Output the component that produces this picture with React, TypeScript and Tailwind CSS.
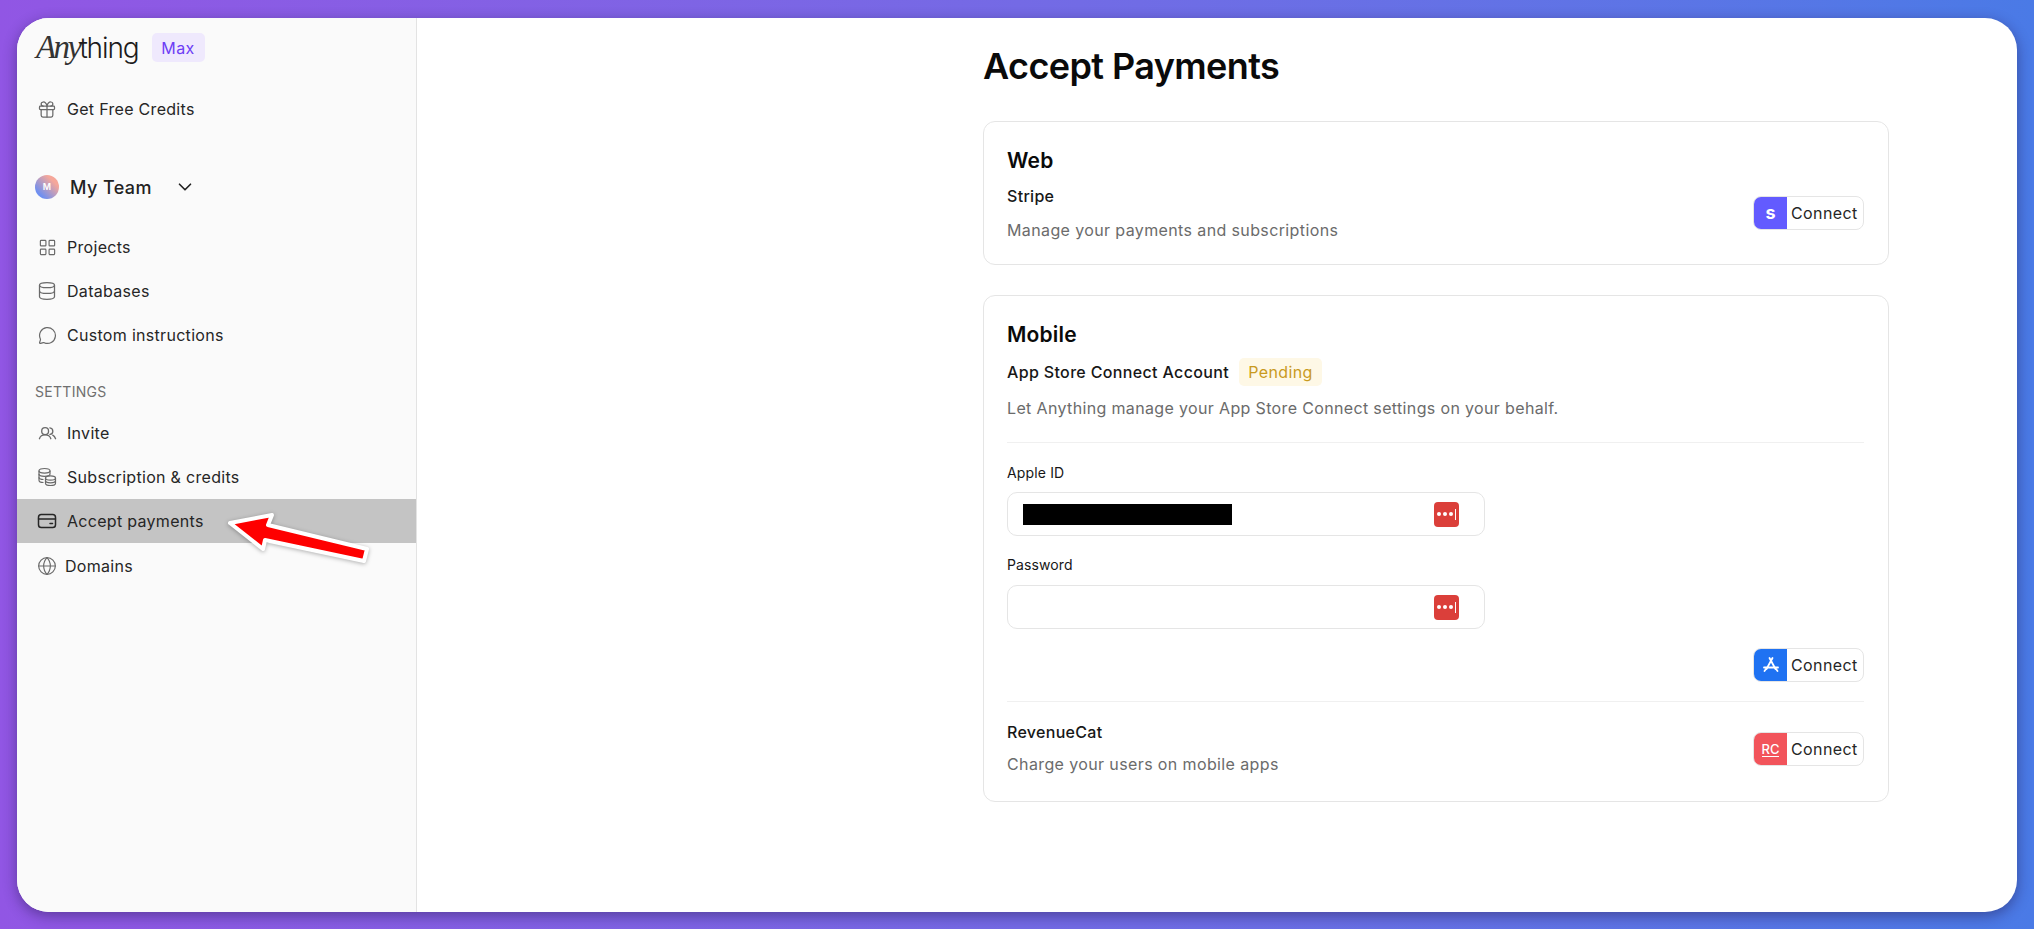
import { ChevronDown, Database, Gift, Globe, LayoutGrid, MessageCircle } from 'lucide-react'
import type { ReactNode } from 'react'

const font = { fontFamily: 'Inter, "Liberation Sans", sans-serif' }

function UsersIcon() {
  return (
    <svg viewBox="0 0 20 20" fill="none" stroke="currentColor" strokeWidth="1.4" strokeLinecap="round" className="h-[19px] w-[19px]">
      <circle cx="7.5" cy="7.5" r="3.6" />
      <path d="M1.5 15.5c.8-2.6 3-4 6-4s5.200 1.400 6 4" />
      <path d="M12.500 4c1.900.2 3.100 1.700 3.100 3.500s-1.200 3.300-3 3.500" />
      <path d="M15.500 11.800c1.400.6 2.400 1.900 3 3.700" />
    </svg>
  )
}

function CoinsIcon() {
  return (
    <svg viewBox="0 0 20 20" fill="none" stroke="currentColor" strokeWidth="1.2" className="h-[20px] w-[20px]">
      <ellipse cx="7.500" cy="3.800" rx="5.500" ry="2.300" />
      <path d="M2 3.800v9.400c0 1.300 2 2.300 4.500 2.300" />
      <path d="M2 7c0 1.300 2.500 2.300 5.500 2.300S13 8.300 13 7V3.800" />
      <path d="M2 10.200c0 1.200 2 2.200 4.500 2.300" />
      <ellipse cx="13.500" cy="11" rx="5" ry="2.200" fill="#fafafa" />
      <path d="M8.500 11v5.200c0 1.300 2.200 2.300 5 2.300s5-1 5-2.300V11" />
      <path d="M8.500 13.600c0 1.300 2.200 2.300 5 2.300s5-1 5-2.300" />
    </svg>
  )
}

function CardIcon() {
  return (
    <svg viewBox="0 0 20 20" fill="none" stroke="currentColor" strokeWidth="1.5" strokeLinecap="round" className="h-[20px] w-[20px]">
      <rect x="1.500" y="3.500" width="17" height="13" rx="2.800" />
      <path d="M1.500 8h17" />
      <path d="M13 12.500h2.500" />
    </svg>
  )
}

function NavRow({ icon, label, active, tight }: { icon: ReactNode; label: string; active?: boolean; tight?: boolean }) {
  return (
    <div className={`flex h-[44px] items-center pl-5 text-[16px] tracking-[0.3px] text-[#262626] ${active ? 'bg-[#c4c4c4]' : ''}`}>
      <span className={`flex h-5 w-5 items-center justify-center ${active ? 'text-[#262626]' : 'text-[#6a6a6a]'}`}>{icon}</span>
      <span className={tight ? 'ml-[8px]' : 'ml-[10px]'}>{label}</span>
    </div>
  )
}

function ConnectButton({ color, className, children }: { color: string; className?: string; children: ReactNode }) {
  return (
    <div className={`flex h-[34px] w-[111px] shrink-0 overflow-hidden rounded-[8px] border border-[#e5e5e5] bg-white ${className ?? ''}`}>
      <span className={`flex w-[33px] shrink-0 items-center justify-center text-white ${color}`}>{children}</span>
      <span className="ml-[4px] text-[16px] leading-[32px] tracking-[0.4px] text-[#262626]">Connect</span>
    </div>
  )
}

function KeyField({ children }: { children?: ReactNode }) {
  return (
    <div className="flex h-[44px] w-[478px] items-center rounded-[10px] border border-[#e5e5e5] bg-white pl-[15px] pr-[25px]">
      {children}
      <span className="ml-auto flex h-[25px] w-[25px] items-center justify-center gap-[2px] rounded-[4px] bg-[#db3f3a]">
        <i className="h-[4px] w-[4px] rounded-full bg-white" />
        <i className="h-[4px] w-[4px] rounded-full bg-white" />
        <i className="h-[4px] w-[4px] rounded-full bg-white" />
        <i className="h-[11px] w-[1px] bg-white" />
      </span>
    </div>
  )
}

export default function App() {
  return (
    <div
      style={font}
      className="h-[929px] w-[2034px] overflow-hidden bg-gradient-to-r from-[#9156e4] to-[#4a7ae6] pb-[17px] pl-[17px] pr-[17px] pt-[18px]"
    >
      <div className="relative flex h-[894px] overflow-hidden rounded-[32px] bg-white shadow-[0_4px_14px_rgba(30,20,70,0.45)]">
        <aside className="w-[400px] shrink-0 border-r border-[#e3e3e3] bg-[#fafafa]">
          <div className="flex h-[48px] items-center pl-[19px] pt-[11px]">
            <span className="text-[33px] leading-none tracking-[-0.08em] text-[#333]" style={{ fontFamily: '"Liberation Serif", serif' }}>
              <em>Any</em>
            </span>
            <span className="text-[28px] font-light leading-none tracking-[-0.04em] text-[#1c1c1c]">thing</span>
            <span className="ml-[13px] flex h-[29px] w-[53px] items-center justify-center rounded-[5px] bg-[#efe9fd] text-[16px] tracking-[0.4px] text-[#6d3df5]">Max</span>
          </div>
          <div className="mt-[21px]">
            <NavRow icon={<Gift size={21} strokeWidth={1.5} />} label="Get Free Credits" />
          </div>
          <div className="mt-[34px] flex h-[44px] items-center pl-[18px]">
            <span
              className="flex h-6 w-6 items-center justify-center rounded-full text-[9px] font-semibold text-white"
              style={{ background: 'linear-gradient(45deg, #6f8ff0 20%, #f5a79a 75%)' }}
            >
              M
            </span>
            <span className="ml-[11px] text-[18px] font-medium tracking-[0.4px] text-[#222]">My Team</span>
            <ChevronDown size={22} strokeWidth={1.8} className="ml-[22px] text-[#222]" />
          </div>
          <div className="mt-[16px]">
            <NavRow icon={<LayoutGrid size={19} strokeWidth={1.5} />} label="Projects" />
            <NavRow icon={<Database size={20} strokeWidth={1.5} />} label="Databases" />
            <NavRow icon={<MessageCircle size={19} strokeWidth={1.5} />} label="Custom instructions" />
          </div>
          <div className="mt-[25px] pl-[18px] text-[14px] leading-[20px] tracking-[0.3px] text-[#6f6f6f]">SETTINGS</div>
          <div className="mt-[9px]">
            <NavRow icon={<UsersIcon />} label="Invite" />
            <NavRow icon={<CoinsIcon />} label="Subscription & credits" />
            <NavRow icon={<CardIcon />} label="Accept payments" active />
            <div className="pt-[1px]">
              <NavRow icon={<Globe size={20} strokeWidth={1.4} />} label="Domains" tight />
            </div>
          </div>
        </aside>

        <main className="flex-1 pl-[566px]">
          <div className="w-[906px]">
            <h1 className="mt-[25px] text-[36px] font-semibold leading-[46px] tracking-[-0.6px] text-[#0a0a0a]">Accept Payments</h1>

            <section className="mt-[32px] h-[144px] rounded-[12px] border border-[#e5e5e5] bg-white pl-[23px] pr-[24px] pt-[25px]">
              <h2 className="text-[21px] font-semibold leading-[28px] tracking-[0.2px] text-[#0a0a0a]">Web</h2>
              <div className="flex items-start justify-between">
                <div>
                  <div className="mt-[9px] text-[16px] font-medium leading-[24px] tracking-[0.3px] text-[#171717]">Stripe</div>
                  <p className="mt-[10px] text-[16px] leading-[24px] tracking-[0.38px] text-[#6b6b6b]">Manage your payments and subscriptions</p>
                </div>
                <ConnectButton color="bg-[#635bff]" className="mt-[21px]">
                  <span className="text-[18px] font-bold leading-none">s</span>
                </ConnectButton>
              </div>
            </section>

            <section className="mt-[30px] h-[507px] rounded-[12px] border border-[#e5e5e5] bg-white pl-[23px] pr-[24px] pt-[25px]">
              <h2 className="text-[21px] font-semibold leading-[28px] tracking-[0.2px] text-[#0a0a0a]">Mobile</h2>
              <div className="mt-[9px] flex h-[28px] items-center">
                <span className="text-[16px] font-medium tracking-[0.35px] text-[#171717]">App Store Connect Account</span>
                <span className="ml-[10px] flex h-[28px] w-[83px] items-center justify-center rounded-[5px] bg-[#fef8e6] text-[16px] tracking-[0.35px] text-[#c99a1e]">Pending</span>
              </div>
              <p className="mt-[10px] text-[16px] leading-[24px] tracking-[0.35px] text-[#6b6b6b]">Let Anything manage your App Store Connect settings on your behalf.</p>
              <div className="mt-[22px] border-t border-[#f0f0f0]" />
              <div className="mt-[20px] text-[14px] leading-[20px] tracking-[0.15px] text-[#171717]">Apple ID</div>
              <div className="mt-[9px]">
                <KeyField>
                  <span className="h-[21px] w-[209px] bg-black" />
                </KeyField>
              </div>
              <div className="mt-[19px] text-[14px] leading-[20px] tracking-[0.1px] text-[#171717]">Password</div>
              <div className="mt-[10px]">
                <KeyField />
              </div>
              <div className="mt-[19px] flex justify-end">
                <ConnectButton color="bg-[#1f72f2]">
                  <svg viewBox="0 0 20 20" fill="none" stroke="currentColor" strokeWidth="1.800" strokeLinecap="round" className="h-[20px] w-[20px]">
                    <path d="M11.500 3 5.500 14" />
                    <path d="M8.500 3l6 11" />
                    <path d="M3 12.500h14" />
                    <path d="M3.500 16l1.500-2" />
                    <path d="M16.500 16 15 14" />
                  </svg>
                </ConnectButton>
              </div>
              <div className="mt-[19px] border-t border-[#f0f0f0]" />
              <div className="flex items-start justify-between">
                <div>
                  <div className="mt-[18px] text-[16px] font-medium leading-[24px] tracking-[0.3px] text-[#171717]">RevenueCat</div>
                  <p className="mt-[8px] text-[16px] leading-[24px] tracking-[0.38px] text-[#6b6b6b]">Charge your users on mobile apps</p>
                </div>
                <ConnectButton color="bg-[#f2545b]" className="mt-[30px]">
                  <span className="border-b border-white text-[13px] font-medium leading-[14px]">RC</span>
                </ConnectButton>
              </div>
            </section>
          </div>
        </main>

        {/* annotation arrow drawn over the sidebar */}
        <svg className="absolute left-0 top-0 h-full w-full overflow-visible" viewBox="0 0 2000 894" style={{ pointerEvents: 'none', filter: 'drop-shadow(0 1px 2px rgba(0,0,0,0.3))' }}>
          <path
            d="M213 505 255 497 251 507 350 531 347 543 248 522 246 531Z"
            fill="#fe0000"
            stroke="#fff"
            strokeWidth="4"
            strokeLinejoin="round"
          />
        </svg>
      </div>
    </div>
  )
}
